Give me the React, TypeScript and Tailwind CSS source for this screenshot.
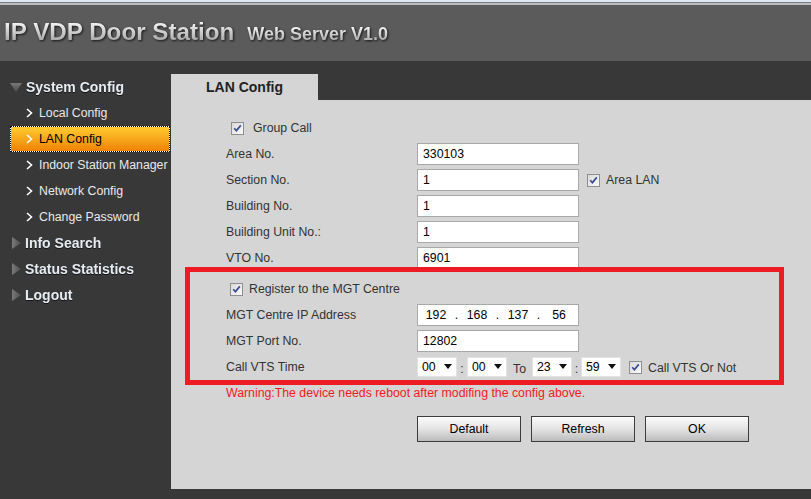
import React from "react"

function Check() {
  return (
    <svg width="13" height="13" viewBox="0 0 13 13" className="shrink-0">
      <defs>
        <linearGradient id="cbg" x1="0" y1="0" x2="1" y2="1">
          <stop offset="0" stopColor="#d8d8d8" />
          <stop offset="1" stopColor="#fbfbfb" />
        </linearGradient>
      </defs>
      <rect x="0.5" y="0.5" width="12" height="12" fill="url(#cbg)" stroke="#8e8f8f" />
      <path d="M3.2 6.2 L5.4 8.6 L9.8 3.4" stroke="#3b4d94" strokeWidth="1.7" fill="none" />
    </svg>
  )
}

function Chevron() {
  return (
    <svg width="7" height="10" viewBox="0 0 7 10" className="shrink-0">
      <path d="M1 1 L5.5 5 L1 9" stroke="#ffffff" strokeWidth="1.6" fill="none" />
    </svg>
  )
}

function TriDown() {
  return (
    <svg width="12" height="9" viewBox="0 0 12 9" className="shrink-0">
      <defs>
        <linearGradient id="tdg" x1="0" y1="0" x2="0" y2="1">
          <stop offset="0" stopColor="#787878" />
          <stop offset="1" stopColor="#4c4c4c" />
        </linearGradient>
      </defs>
      <path d="M0 0 H12 L6 9 Z" fill="url(#tdg)" />
    </svg>
  )
}

function TriRight() {
  return (
    <svg width="9" height="12" viewBox="0 0 9 12" className="shrink-0">
      <defs>
        <linearGradient id="trg" x1="0" y1="0" x2="1" y2="0">
          <stop offset="0" stopColor="#7a7a7a" />
          <stop offset="1" stopColor="#4e4e4e" />
        </linearGradient>
      </defs>
      <path d="M0 0 L9 6 L0 12 Z" fill="url(#trg)" />
    </svg>
  )
}

function SideHead({ label, open }: { label: string; open?: boolean }) {
  return (
    <div className="flex h-[26px] items-center">
      {open ? (
        <div className="ml-[10px] flex w-[16px]"><TriDown /></div>
      ) : (
        <div className="ml-[12px] flex w-[13px]"><TriRight /></div>
      )}
      <span className="text-[14px] font-bold text-[#e6ecf2] drop-shadow-[0_1px_0_rgba(0,0,0,0.6)]">{label}</span>
    </div>
  )
}

function SideItem({ label, active }: { label: string; active?: boolean }) {
  if (active) {
    return (
      <div className="ml-[10px] h-[26px] w-[160px] border border-dotted border-black bg-white">
        <div className="flex h-full items-center bg-linear-to-b from-[#ffcb2e] to-[#ee8200] pl-[15px]">
          <Chevron />
          <span className="ml-[6px] text-[12.3px] text-black">{label}</span>
        </div>
      </div>
    )
  }
  return (
    <div className="ml-[10px] flex h-[26px] w-[160px] items-center pl-[16px]">
      <Chevron />
      <span className="ml-[6px] text-[12.3px] text-[#e8e8e8]">{label}</span>
    </div>
  )
}

function Row({ label, children }: { label: string; children?: React.ReactNode }) {
  return (
    <div className="flex h-[26px] items-center">
      <div className="w-[191px] shrink-0 pt-px">{label}</div>
      {children}
    </div>
  )
}

function TextBox({ value }: { value: string }) {
  return (
    <div className="flex h-[22px] w-[162px] items-center border border-[#a9a9a9] bg-white pl-[5px] text-black">
      {value}
    </div>
  )
}

function Sel({ value }: { value: string }) {
  return (
    <div className="flex h-[20px] w-[40px] items-center justify-between border border-[#e2e2e2] bg-white pl-[4px] pr-[4px] text-black">
      <span>{value}</span>
      <svg width="8" height="5" viewBox="0 0 8 5" className="mb-[2px]">
        <path d="M0 0 H8 L4 5 Z" fill="#111" />
      </svg>
    </div>
  )
}

function Btn({ label }: { label: string }) {
  return (
    <div className="flex h-[26px] w-[104px] items-center justify-center border border-[#3c3c3c] bg-linear-to-b from-[#fbfbfb] via-[#e4e4e4] to-[#bcbcbc] text-[12.3px] text-black">
      {label}
    </div>
  )
}

export default function App() {
  const ip = ["192", "168", "137", "56"]

  return (
    <div className="flex h-[499px] w-[811px] flex-col bg-[#383838] font-['Liberation_Sans',Arial,sans-serif]">
      {/* header */}
      <div className="flex h-[61px] flex-col">
        <div className="h-[2px] bg-[#dfe8f1]" />
        <div className="h-px bg-[#717d89]" />
        <div className="h-[2px] bg-[#bcbcbc]" />
        <div className="flex-1 bg-[#5b5b5b] pl-[4px] pt-[15px]">
          <div className="flex items-baseline drop-shadow-[1px_1px_1px_rgba(0,0,0,0.75)]">
            <span className="bg-linear-to-b from-[#ffffff] to-[#9c9c9c] bg-clip-text text-[24.2px] font-bold leading-none text-transparent">
              IP VDP Door Station
            </span>
            <span className="ml-[13px] bg-linear-to-b from-[#ffffff] to-[#a2a2a2] bg-clip-text text-[18px] font-bold leading-none text-transparent">
              Web Server V1.0
            </span>
          </div>
        </div>
      </div>

      <div className="flex flex-1">
        {/* sidebar */}
        <div className="w-[171px] shrink-0 pt-[13px]">
          <SideHead label="System Config" open />
          <SideItem label="Local Config" />
          <SideItem label="LAN Config" active />
          <SideItem label="Indoor Station Manager" />
          <SideItem label="Network Config" />
          <SideItem label="Change Password" />
          <SideHead label="Info Search" />
          <SideHead label="Status Statistics" />
          <SideHead label="Logout" />
        </div>

        {/* main */}
        <div className="flex-1 pt-[13px]">
          <div className="flex h-[26px] w-[147px] items-center justify-center bg-[#d5d5d5] text-[14px] font-bold text-[#222]">
            LAN Config
          </div>
          <div className="relative h-[389px] bg-[#d5d5d5] pl-[55px] pt-[15px] text-[12.3px] text-[#333]">
            <div className="flex h-[26px] items-center">
              <div className="ml-[5px] flex"><Check /></div>
              <span className="ml-[9px]">Group Call</span>
            </div>
            <Row label="Area No."><TextBox value="330103" /></Row>
            <Row label="Section No.">
              <TextBox value="1" />
              <div className="ml-[8px] flex"><Check /></div>
              <span className="ml-[6px]">Area LAN</span>
            </Row>
            <Row label="Building No."><TextBox value="1" /></Row>
            <Row label="Building Unit No.:"><TextBox value="1" /></Row>
            <Row label="VTO No."><TextBox value="6901" /></Row>

            <div className="mt-[5px] flex h-[26px] items-center">
              <div className="ml-[4px] flex"><Check /></div>
              <span className="ml-[6px]">Register to the MGT Centre</span>
            </div>
            <Row label="MGT Centre IP Address">
              <div className="flex h-[22px] w-[162px] items-center border border-[#a9a9a9] bg-white pl-px text-black">
                {ip.map((p, i) => (
                  <React.Fragment key={i}>
                    {i > 0 && <span className="w-[7px] text-center">.</span>}
                    <span className="w-[34px] text-center">{p}</span>
                  </React.Fragment>
                ))}
              </div>
            </Row>
            <Row label="MGT Port No."><TextBox value="12802" /></Row>
            <Row label="Call VTS Time">
              <Sel value="00" />
              <span className="w-[10px] pt-[4px] text-center">:</span>
              <Sel value="00" />
              <span className="w-[25px] pt-[4px] text-center">To</span>
              <Sel value="23" />
              <span className="w-[9px] pt-[4px] text-center">:</span>
              <Sel value="59" />
              <div className="ml-[8px] flex"><Check /></div>
              <span className="ml-[6px] pt-[2px]">Call VTS Or Not</span>
            </Row>

            <div className="flex h-[26px] items-center text-[#ee1c24]">
              Warning:The device needs reboot after modifing the config above.
            </div>

            <div className="mt-[10px] flex gap-[10px] pl-[191px]">
              <Btn label="Default" />
              <Btn label="Refresh" />
              <Btn label="OK" />
            </div>

            {/* red annotation box */}
            <div className="pointer-events-none absolute left-[14px] top-[167px] h-[118px] w-[599px] border-[5px] border-[#ed1c24]" />
          </div>
        </div>
      </div>
    </div>
  )
}
